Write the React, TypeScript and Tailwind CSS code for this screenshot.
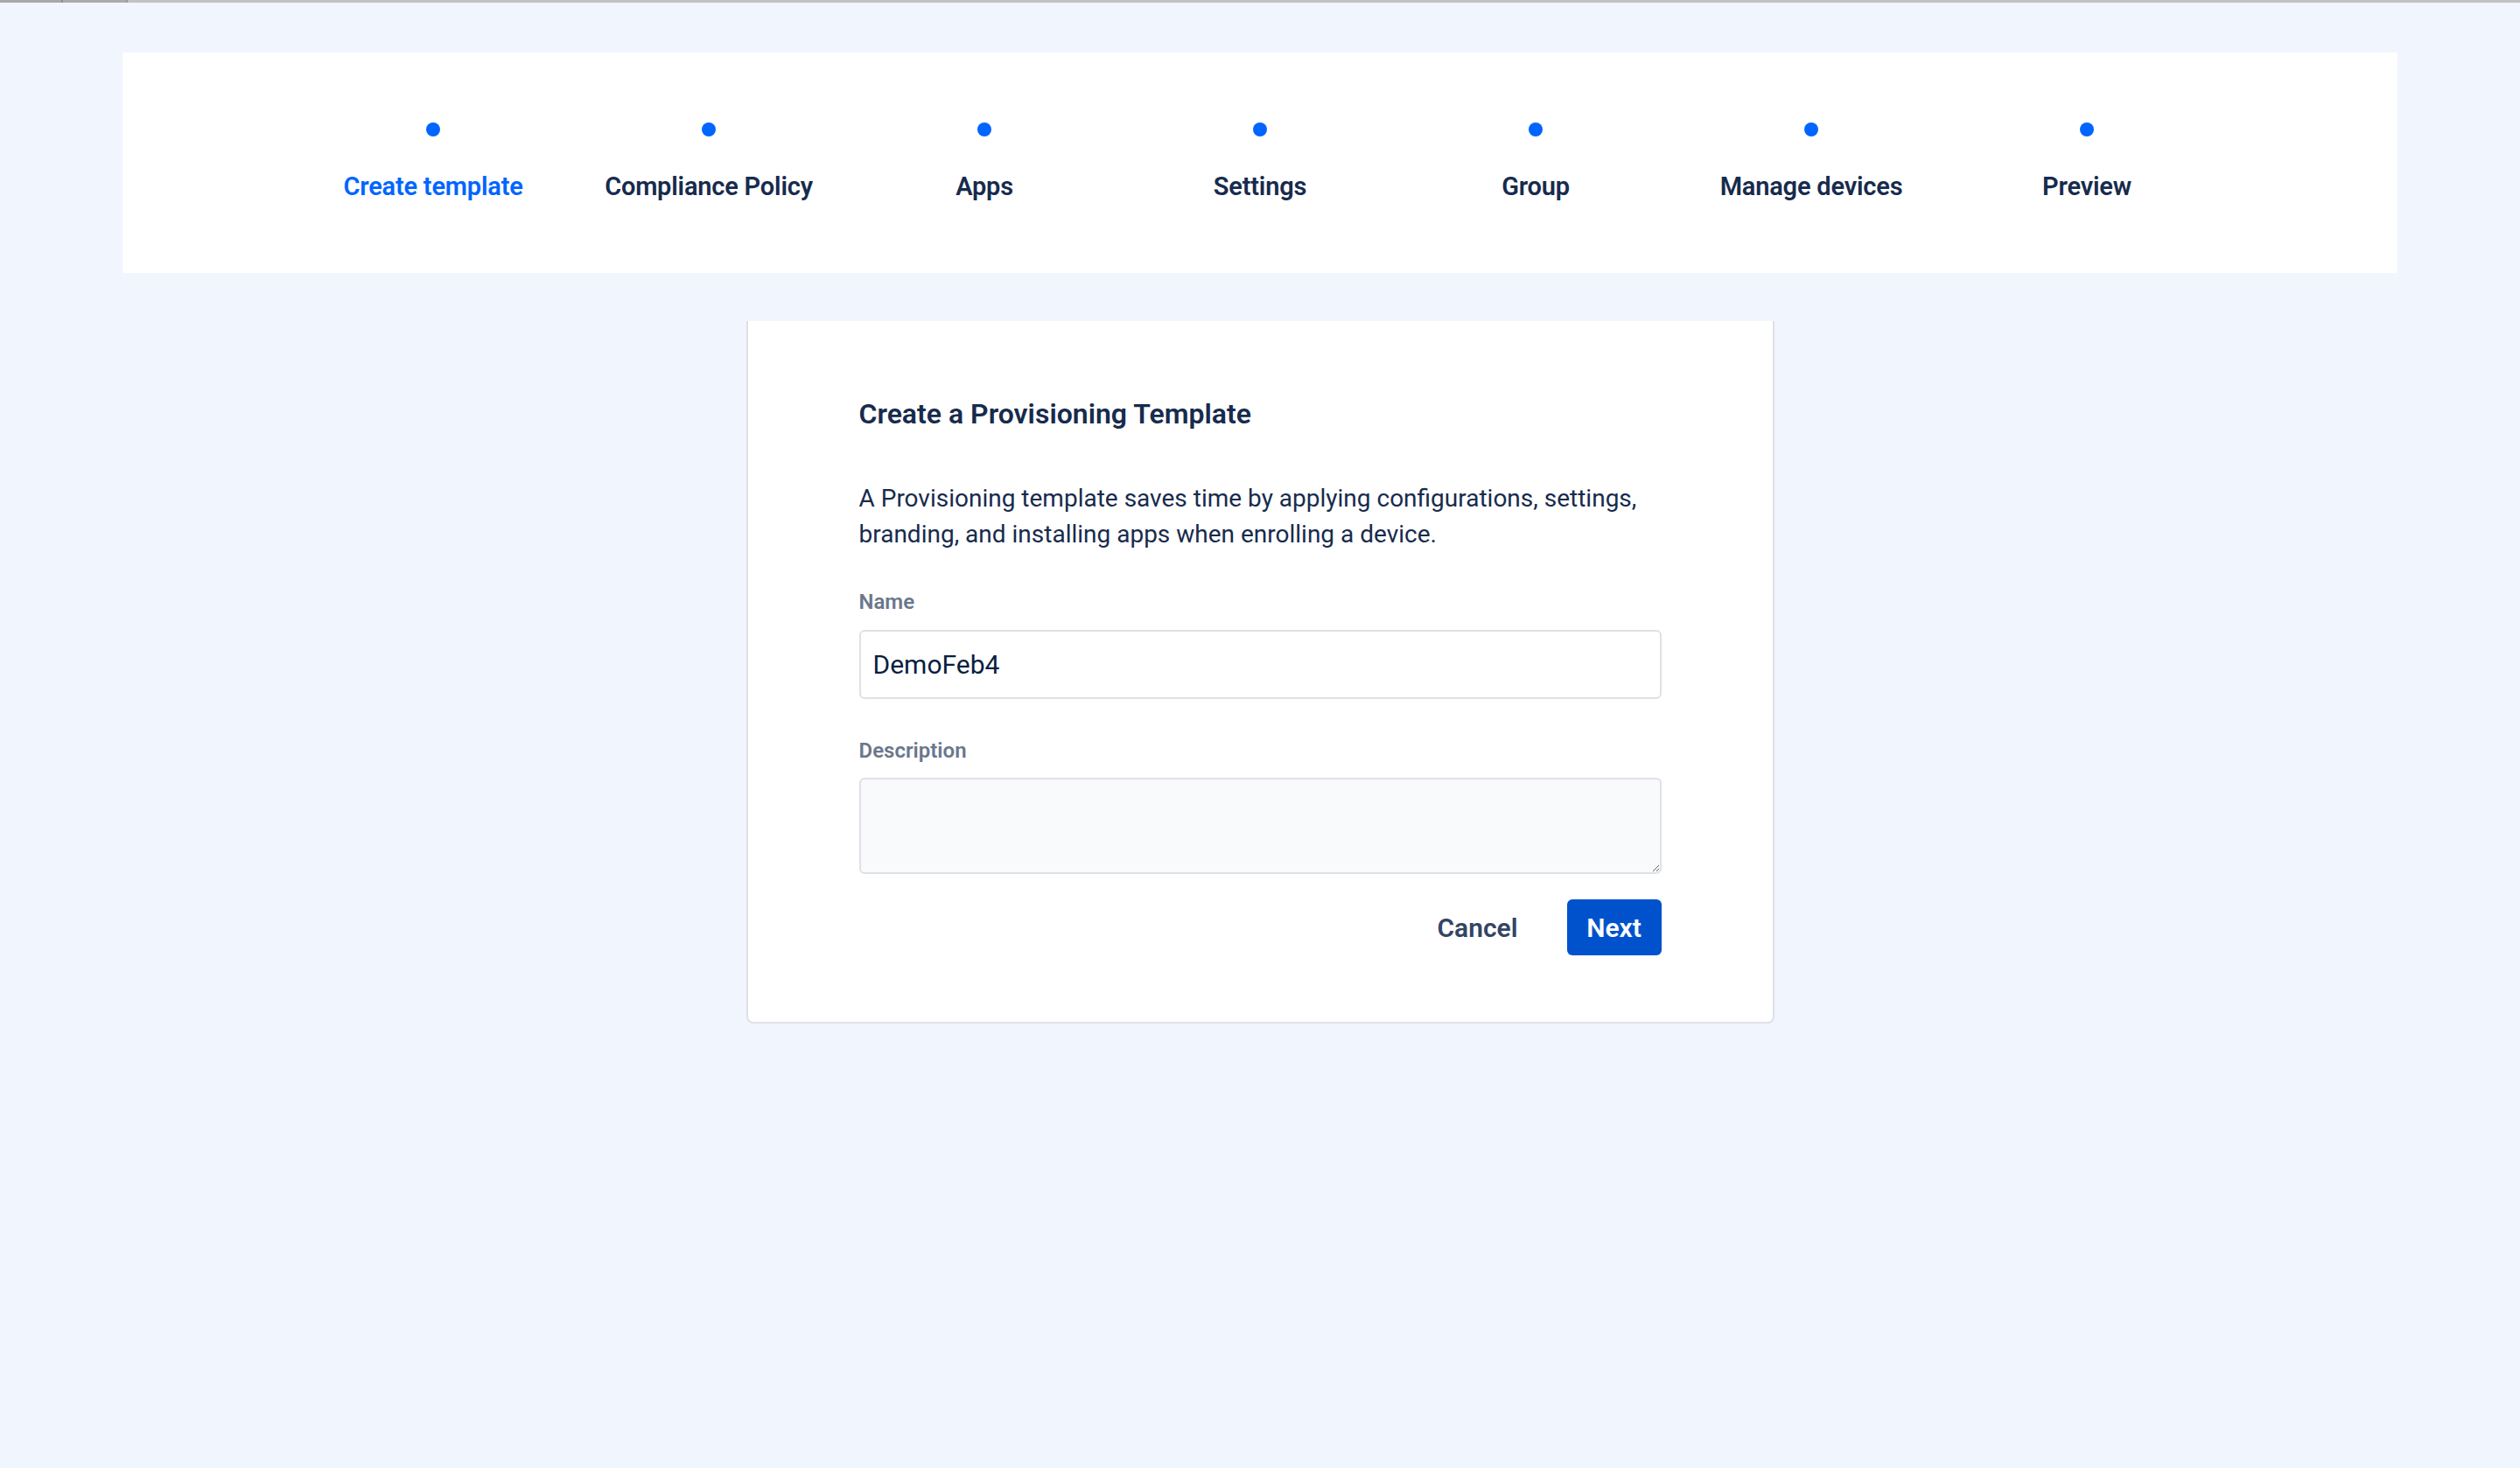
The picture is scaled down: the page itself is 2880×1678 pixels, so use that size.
import { useEffect, useRef, useState } from 'react';

const steps = [
  'Create template',
  'Compliance Policy',
  'Apps',
  'Settings',
  'Group',
  'Manage devices',
  'Preview',
];

function Stepper({ active }: { active: number }) {
  return (
    <div className="mx-[140px] mt-[57px] h-[252px] bg-white flex justify-center">
      <div className="flex pt-[80px]">
        {steps.map((label, i) => (
          <div key={label} className="w-[315px] flex flex-col items-center">
            <span className="block w-4 h-4 rounded-full bg-[#0065ff]" />
            <span
              className={`mt-[39px] text-[29px] leading-[36px] font-semibold tracking-[-0.2px] ${
                i === active ? 'text-[#0065ff]' : 'text-[#172b4d]'
              }`}
            >
              {label}
            </span>
          </div>
        ))}
      </div>
    </div>
  );
}

export default function App() {
  const [name, setName] = useState('DemoFeb4');
  const [description, setDescription] = useState('');
  const nameRef = useRef<HTMLInputElement>(null);

  // focus the name field with the caret at the end
  useEffect(() => {
    const el = nameRef.current;
    if (!el) return;
    el.focus();
    el.setSelectionRange(el.value.length, el.value.length);
  }, []);

  return (
    <div className="min-h-screen bg-[#f0f5fe] font-['Roboto','Liberation_Sans',sans-serif] text-[#172b4d]">
      {/* browser tab strip remnant */}
      <div className="flex h-[3px]">
        <div className="w-[70px] bg-[#a8a8a8]" />
        <div className="w-[2px] bg-[#8f8f8f]" />
        <div className="w-[72px] bg-[#ababab]" />
        <div className="w-[2px] bg-[#999999]" />
        <div className="flex-1 bg-[#c2c2c2]" />
      </div>

      <Stepper active={0} />

      {/* Form card */}
      <div className="w-[1175px] mx-auto mt-[55px] bg-white border-x-2 border-b-2 border-[#dfe1e6] rounded-b-[8px] px-[127px] pt-[86px] pb-[76px]">
        <h2 className="text-[32px] leading-[40px] font-semibold">
          Create a Provisioning Template
        </h2>
        <p className="mt-[56px] text-[28px] leading-[41px] text-[#172b4d]">
          A Provisioning template saves time by applying configurations, settings,
          <br />
          branding, and installing apps when enrolling a device.
        </p>

        <label className="block mt-[41px] text-[24px] leading-[32px] font-semibold text-[#6b778c]">
          Name
        </label>
        <input
          ref={nameRef}
          value={name}
          onChange={(e) => setName(e.target.value)}
          className="mt-[16px] block w-full h-[79px] px-[14px] bg-white border-2 border-[#dfe1e6] rounded-[6px] text-[30px] text-[#091e42] outline-none caret-[#091e42]"
        />

        <label className="block mt-[43px] text-[24px] leading-[32px] font-semibold text-[#6b778c]">
          Description
        </label>
        <textarea
          value={description}
          onChange={(e) => setDescription(e.target.value)}
          className="mt-[15px] block w-full h-[110px] px-[14px] py-[10px] bg-[#f9fafc] border-2 border-[#dfe1e6] rounded-[6px] text-[30px] outline-none"
        />

        <div className="mt-[29px] flex justify-end items-center gap-[28px]">
          <button className="h-[64px] px-[28px] text-[30px] font-semibold text-[#344563] rounded-[6px]">
            Cancel
          </button>
          <button className="h-[64px] w-[108px] text-[30px] font-semibold text-white bg-[#0052cc] rounded-[6px]">
            Next
          </button>
        </div>
      </div>
    </div>
  );
}
